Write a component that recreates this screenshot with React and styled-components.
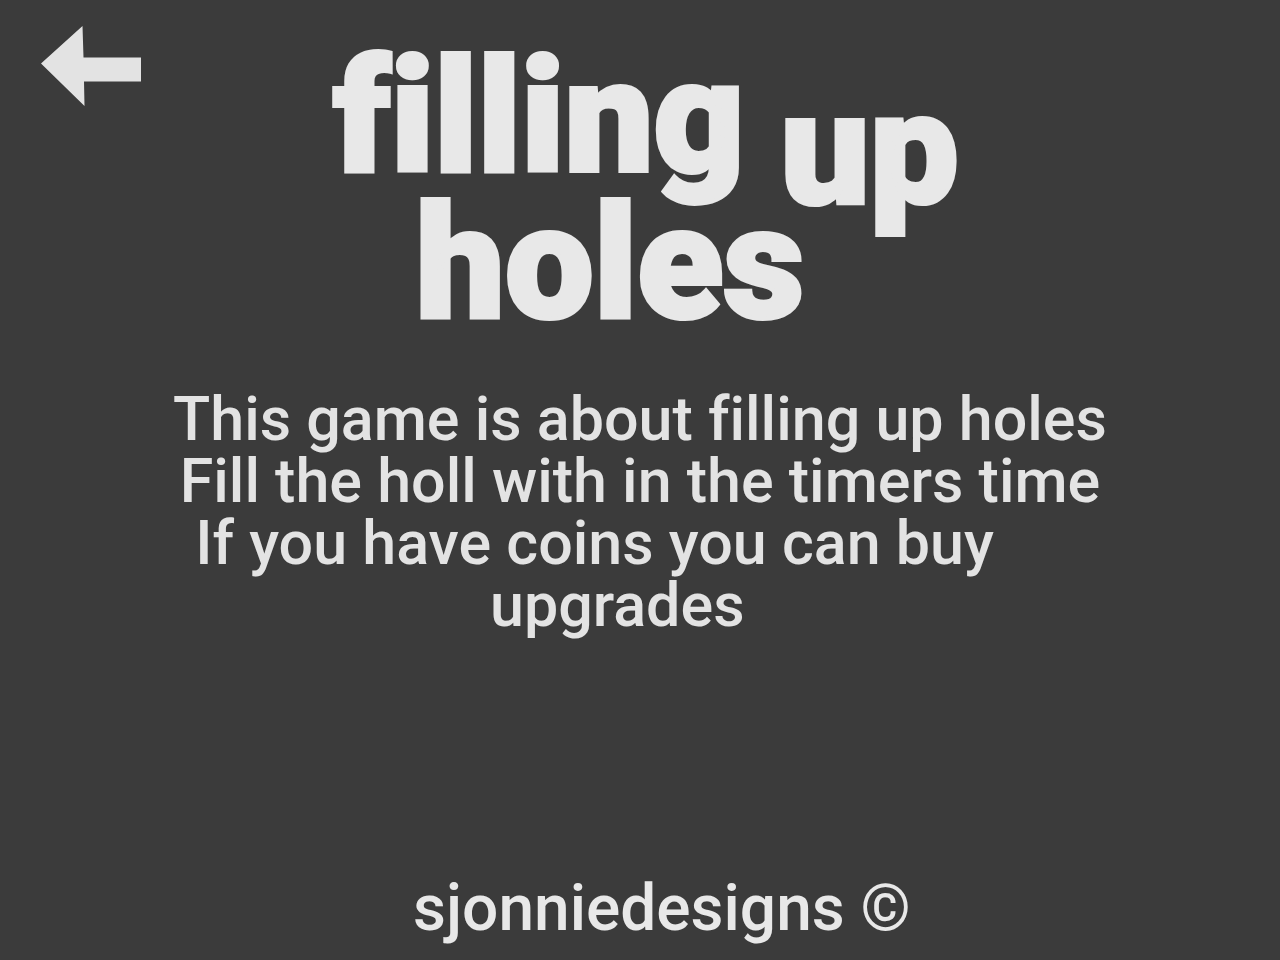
import styled, { createGlobalStyle } from 'styled-components'

const GlobalStyle = createGlobalStyle`
  body {
    margin: 0;
    background-color: #3b3b3b;
  }
`

const Page = styled.div`
  box-sizing: border-box;
  min-height: 100vh;
  display: flex;
  flex-direction: column;
  color: #e3e3e3;
  font-family: Roboto, 'Liberation Sans', sans-serif;
  font-variant-ligatures: none;
`

const Header = styled.header`
  display: grid;
  grid-template-columns: 1fr auto 1fr;
  align-items: start;
  padding: 26px 28px 0 40px;
`

const BackButton = styled.button`
  justify-self: start;
  padding: 0;
  border: none;
  background: none;
  color: inherit;
  cursor: pointer;

  svg {
    display: block;
  }
`

const Title = styled.h1`
  display: grid;
  justify-items: center;
  margin: 0;
  padding-top: 18px;
  color: #e8e8e8;
  font-size: 158px;
  font-weight: 900;
  line-height: 146px;
  -webkit-text-stroke: 4px #e8e8e8;
`

const TitleRow = styled.span`
  display: flex;
  gap: 36px;
  padding-right: ${props => (props.$indent ? '72px' : '0')};
`

const Word = styled.span`
  margin-top: ${props => (props.$low ? '32px' : '0')};
  margin-bottom: ${props => (props.$low ? '-32px' : '0')};
`

const Rules = styled.main`
  padding-top: 52px;
  text-align: center;
`

const Line = styled.p`
  margin: 0;
  font-size: 61px;
  font-weight: 500;
  line-height: 62px;
  white-space: pre;
`

const Footer = styled.footer`
  margin-top: auto;
  padding: 0 0 12px 44px;
  color: #e8e8e8;
  font-size: 64px;
  font-weight: 500;
  line-height: 78px;
  text-align: center;
`

// trailing spaces pull the last two lines left of centre
const rules = [
  'This game is about filling up holes',
  'Fill the holl with in the timers time',
  'If you have coins you can buy      ',
  'upgrades   ',
]

export default function App() {
  return (
    <Page>
      <GlobalStyle />
      <Header>
        <BackButton type="button" aria-label="Back">
          <svg width="102" height="80" viewBox="0 0 102 80" fill="currentColor">
            <path d="M1 37.500L42.500 0L43.500 31.500H101V55.500H44L44.500 80Z" />
          </svg>
        </BackButton>
        <Title>
          <TitleRow>
            <Word>filling</Word>
            <Word $low>up</Word>
          </TitleRow>
          <TitleRow $indent>
            <Word>holes</Word>
          </TitleRow>
        </Title>
      </Header>
      <Rules>
        {rules.map(rule => (
          <Line key={rule}>{rule}</Line>
        ))}
      </Rules>
      <Footer>sjonniedesigns ©</Footer>
    </Page>
  )
}
